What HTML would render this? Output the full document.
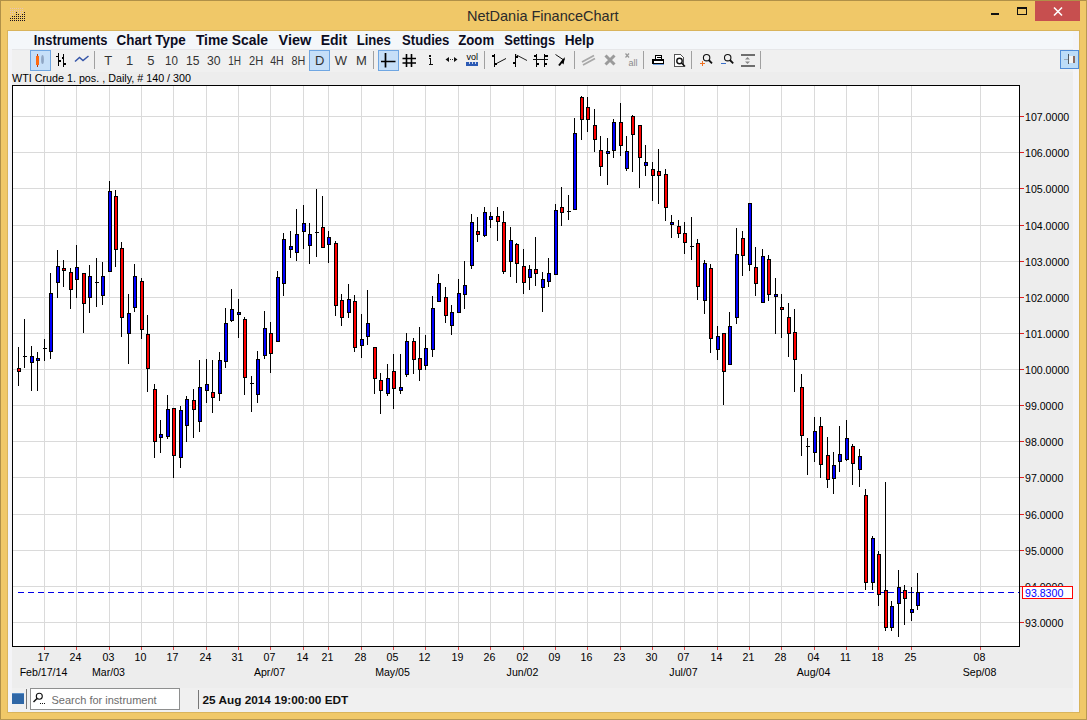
<!DOCTYPE html>
<html><head><meta charset="utf-8"><style>
*{margin:0;padding:0;box-sizing:border-box}
body{width:1087px;height:720px;overflow:hidden;background:#F0C868;font-family:"Liberation Sans",sans-serif;position:relative}
.a{position:absolute}
</style></head><body>
<div class="a" style="left:0;top:0;width:1087px;height:1px;background:#B09048"></div>
<div class="a" style="left:0;top:0;width:1px;height:720px;background:#B09048"></div>
<div class="a" style="left:1086px;top:0;width:1px;height:720px;background:#B89850"></div>
<div class="a" style="left:0;top:719px;width:1087px;height:1px;background:#B89850"></div>
<div class="a" style="left:7px;top:30px;width:1073px;height:683px;background:#D9B45C"></div>
<div class="a" style="left:8px;top:31px;width:1071px;height:681px;background:#EDEDED"></div>
<div class="a" style="left:8px;top:49px;width:1065px;height:23px;background:#F0F0F0"></div>
<div class="a" style="left:8px;top:49px;width:1065px;height:1px;background:#E6E7E9"></div>
<div class="a" style="left:8px;top:688px;width:1065px;height:24px;background:#F0F0F0"></div>
<div class="a" style="left:8px;top:49px;width:4px;height:663px;background:#F4F4F7"></div>
<div class="a" style="left:1073px;top:31px;width:6px;height:681px;background:#F4F4F8"></div>
<div class="a" style="left:8px;top:31px;width:1065px;height:18px;background:#F4F7FA"></div>
<svg class="a" style="left:0;top:0" width="1087" height="720" font-family="Liberation Sans, sans-serif" shape-rendering="crispEdges">
<rect x="10" y="8" width="1" height="1" fill="#E6C4B8"/>
<rect x="12" y="8" width="1" height="1" fill="#E6C4B8"/>
<rect x="14" y="8" width="1" height="1" fill="#E6C4B8"/>
<rect x="16" y="8" width="1" height="1" fill="#E6C4B8"/>
<rect x="18" y="8" width="1" height="1" fill="#E6C4B8"/>
<rect x="20" y="8" width="1" height="1" fill="#E6C4B8"/>
<rect x="22" y="8" width="1" height="1" fill="#E6C4B8"/>
<rect x="10" y="10" width="1" height="1" fill="#E6C4B8"/>
<rect x="12" y="10" width="1" height="1" fill="#E6C4B8"/>
<rect x="14" y="10" width="1" height="1" fill="#E6C4B8"/>
<rect x="16" y="10" width="1" height="1" fill="#E6C4B8"/>
<rect x="18" y="10" width="1" height="1" fill="#E6C4B8"/>
<rect x="20" y="10" width="1" height="1" fill="#E6C4B8"/>
<rect x="22" y="10" width="1" height="1" fill="#E6C4B8"/>
<rect x="10" y="12" width="1" height="1" fill="#E6C4B8"/>
<rect x="12" y="12" width="1" height="1" fill="#E6C4B8"/>
<rect x="14" y="12" width="1" height="1" fill="#E6C4B8"/>
<rect x="18" y="12" width="1" height="1" fill="#E6C4B8"/>
<rect x="20" y="12" width="1" height="1" fill="#E6C4B8"/>
<rect x="22" y="12" width="1" height="1" fill="#E6C4B8"/>
<rect x="10" y="14" width="1" height="1" fill="#E6C4B8"/>
<rect x="12" y="14" width="1" height="1" fill="#E6C4B8"/>
<rect x="20" y="14" width="1" height="1" fill="#E6C4B8"/>
<rect x="16" y="12" width="1" height="1" fill="#1A1020"/>
<rect x="24" y="12" width="1" height="1" fill="#1A1020"/>
<rect x="16" y="14" width="1" height="1" fill="#1A1020"/>
<rect x="18" y="14" width="1" height="1" fill="#1A1020"/>
<rect x="22" y="14" width="1" height="1" fill="#1A1020"/>
<rect x="24" y="14" width="1" height="1" fill="#1A1020"/>
<rect x="12" y="16" width="1" height="1" fill="#1A1020"/>
<rect x="14" y="16" width="1" height="1" fill="#1A1020"/>
<rect x="16" y="16" width="1" height="1" fill="#1A1020"/>
<rect x="18" y="16" width="1" height="1" fill="#1A1020"/>
<rect x="20" y="16" width="1" height="1" fill="#1A1020"/>
<rect x="22" y="16" width="1" height="1" fill="#1A1020"/>
<rect x="24" y="16" width="1" height="1" fill="#1A1020"/>
<rect x="10" y="18" width="1" height="1" fill="#1A1020"/>
<rect x="12" y="18" width="1" height="1" fill="#1A1020"/>
<rect x="14" y="18" width="1" height="1" fill="#1A1020"/>
<rect x="16" y="18" width="1" height="1" fill="#1A1020"/>
<rect x="18" y="18" width="1" height="1" fill="#1A1020"/>
<rect x="20" y="18" width="1" height="1" fill="#1A1020"/>
<rect x="22" y="18" width="1" height="1" fill="#1A1020"/>
<rect x="24" y="18" width="1" height="1" fill="#1A1020"/>
<rect x="10" y="20" width="1" height="1" fill="#1A1020"/>
<rect x="12" y="20" width="1" height="1" fill="#1A1020"/>
<rect x="14" y="20" width="1" height="1" fill="#1A1020"/>
<rect x="16" y="20" width="1" height="1" fill="#1A1020"/>
<rect x="18" y="20" width="1" height="1" fill="#1A1020"/>
<rect x="20" y="20" width="1" height="1" fill="#1A1020"/>
<rect x="22" y="20" width="1" height="1" fill="#1A1020"/>
<rect x="24" y="20" width="1" height="1" fill="#1A1020"/>
<rect x="1035" y="1" width="45" height="20" fill="#C74F4F"/>
<path d="M1054 7.5 L1062 15.5 M1062 7.5 L1054 15.5" stroke="#fff" stroke-width="1.6" shape-rendering="auto"/>
<rect x="991" y="13" width="8" height="2" fill="#111"/>
<rect x="1017.5" y="7.5" width="9" height="7" fill="none" stroke="#111" stroke-width="1"/>
<rect x="1017" y="7" width="10" height="2" fill="#111"/>
<rect x="30.5" y="50.5" width="20" height="20" fill="#C6DFF8" stroke="#6FA6E2" stroke-width="1"/>
<rect x="309.5" y="50.5" width="20" height="20" fill="#C6DFF8" stroke="#6FA6E2" stroke-width="1"/>
<rect x="378.5" y="50.5" width="20" height="20" fill="#C6DFF8" stroke="#6FA6E2" stroke-width="1"/>
<rect x="1060.5" y="50.5" width="18" height="18" fill="#BCDCF8" stroke="#4F8CD8" stroke-width="1"/>
<rect x="37" y="54" width="1" height="13" fill="#B03A10"/>
<rect x="36" y="56" width="3" height="9" fill="#FF6A10"/>
<ellipse cx="42.5" cy="59.5" rx="1.4" ry="4.5" fill="#8FA6C4" shape-rendering="auto"/>
<path d="M58.5 53 V66 M63.5 54 V67 M56 56.5 H58.5 M58.5 61 H60.5 M61.5 58 H63.5 M63.5 64 H66" stroke="#000" stroke-width="1.6" fill="none"/>
<polyline points="75,61.5 79.5,57.5 83,60.5 88.5,56" stroke="#3555A8" stroke-width="1.5" fill="none" shape-rendering="auto"/>
<rect x="94" y="51" width="1" height="18" fill="#A0A0A0"/>
<rect x="373" y="51" width="1" height="18" fill="#A0A0A0"/>
<rect x="484" y="51" width="1" height="18" fill="#A0A0A0"/>
<rect x="574" y="51" width="1" height="18" fill="#A0A0A0"/>
<rect x="643" y="51" width="1" height="18" fill="#A0A0A0"/>
<rect x="691" y="51" width="1" height="18" fill="#A0A0A0"/>
<rect x="760" y="51" width="1" height="18" fill="#A0A0A0"/>
<path d="M385.5 53 V67.5 M381 61.5 H395.5" stroke="#000" stroke-width="1.7" fill="none" shape-rendering="auto"/>
<path d="M406.5 54 V67 M411.5 54 V67 M402.5 58.5 H416 M402.5 63 H416" stroke="#000" stroke-width="1.6" fill="none" shape-rendering="auto"/>
<rect x="429" y="54.5" width="2" height="2" fill="#111"/>
<path d="M428.5 58.5 H430.5 V64.5 M428.5 64.5 H432.5" stroke="#111" stroke-width="1.4" fill="none"/>
<path d="M445.5 59.5 L449 57 V62 Z M457.5 59.5 L454 57 V62 Z" fill="#111" shape-rendering="auto"/>
<rect x="450" y="59" width="1" height="1" fill="#333"/><rect x="452" y="59" width="1" height="1" fill="#333"/>
<text x="466.5" y="59.8" font-size="9.5" fill="#000" font-family="Liberation Sans, sans-serif" textLength="11.5" lengthAdjust="spacingAndGlyphs">vol</text>
<rect x="466" y="62" width="12" height="4" fill="#2C5AB4"/>
<rect x="469" y="62" width="1" height="2" fill="#C8D4EC"/><rect x="472" y="62" width="1" height="2" fill="#C8D4EC"/><rect x="475" y="62" width="1" height="2" fill="#C8D4EC"/>
<path d="M494.5 54 V67 M492 56 H494.5 M494.5 64 H497" stroke="#000" stroke-width="1.6" fill="none"/><path d="M496.5 63.5 L506 58.5" stroke="#111" stroke-width="1" fill="none" shape-rendering="auto"/>
<path d="M515.5 54 V67 M513 63 H515.5 M515.5 57 H518" stroke="#000" stroke-width="1.5" fill="none"/>
<path d="M516.5 55 L527 60.5" stroke="#222" stroke-width="1" fill="none" shape-rendering="auto"/>
<path d="M536.5 54 V67 M544.5 54 V67 M533.5 56 H536.5 M544.5 56 H547.5 M536.5 64 H539 M544.5 64 H547" stroke="#000" stroke-width="1.6" fill="none"/><rect x="533" y="59" width="15" height="1" fill="#111"/>
<path d="M555.5 54.5 L563 59.5" stroke="#111" stroke-width="1" fill="none" shape-rendering="auto"/>
<path d="M565 57 L563.5 64.5 L561 62 Z" fill="#000" shape-rendering="auto"/>
<path d="M559 65.5 L564 59" stroke="#000" stroke-width="2" shape-rendering="auto"/>
<path d="M582 62 L594 55.5 M583 65 L595 58.5" stroke="#A8A8A8" stroke-width="1.8" fill="none" shape-rendering="auto"/>
<path d="M605.5 55.5 L614.5 64.5 M614.5 55.5 L605.5 64.5" stroke="#9A9A9A" stroke-width="3" fill="none" shape-rendering="auto"/>
<path d="M625.5 53.5 L629 57.5 M629 53.5 L625.5 57.5" stroke="#999" stroke-width="1.2" fill="none" shape-rendering="auto"/>
<text x="628.5" y="65.5" font-size="9" fill="#8A8A8A" font-family="Liberation Sans, sans-serif">all</text>
<path d="M655.5 55.5 H661.5 V59.5 H655.5 Z M656.5 57.5 H660.5" stroke="#000" stroke-width="1" fill="#fff"/>
<path d="M653 60 H663.5 V63.5 H653 Z" stroke="#000" stroke-width="1.5" fill="#fff"/>
<rect x="653" y="64" width="11" height="1" fill="#6A9ADA"/>
<path d="M674.5 54.5 H680.5 L683.5 57.5 V66.5 H674.5 Z" stroke="#555" stroke-width="1" fill="#fff"/>
<circle cx="679.5" cy="61" r="2.7" stroke="#111" stroke-width="1.4" fill="none" shape-rendering="auto"/>
<path d="M681.5 63 L685 66.5" stroke="#111" stroke-width="1.6" shape-rendering="auto"/>
<circle cx="706.6" cy="57.7" r="3.2" stroke="#111" stroke-width="1.1" fill="none" shape-rendering="auto"/>
<path d="M708.7 60 L712 63.3" stroke="#111" stroke-width="1.8" shape-rendering="auto"/>
<path d="M700 63.5 H705 M702.5 61 V66" stroke="#F07020" stroke-width="1.2"/>
<circle cx="727.7" cy="57.7" r="3.2" stroke="#111" stroke-width="1.1" fill="none" shape-rendering="auto"/>
<path d="M729.9 60 L733.2 63.3" stroke="#111" stroke-width="1.8" shape-rendering="auto"/>
<rect x="721" y="63" width="5" height="1" fill="#3A6FC8"/>
<rect x="741" y="54" width="14" height="2" fill="#6E6E6E"/><rect x="741" y="65" width="14" height="2" fill="#6E6E6E"/>
<path d="M745 59.5 L747.5 57 L750 59.5 Z M745 61.5 L747.5 64 L750 61.5 Z" fill="#888" shape-rendering="auto"/>
<rect x="1064" y="59" width="4" height="1" fill="#9AA8B8"/><rect x="1068" y="54" width="1" height="10" fill="#505860"/><rect x="1069" y="56" width="4" height="7" fill="#F4F4F4"/><rect x="1073" y="56" width="2" height="7" fill="#8A6A60"/>
<rect x="12" y="693" width="12" height="11" fill="#2F67A6"/>
<rect x="12" y="693" width="12" height="1" fill="#5C90C8"/>
<rect x="26" y="689" width="1" height="20" fill="#777"/>
<rect x="30.5" y="688.5" width="149" height="21" fill="#fff" stroke="#8E8F8F" stroke-width="1"/>
<circle cx="39.3" cy="696.2" r="3" stroke="#111" stroke-width="1.1" fill="none" shape-rendering="auto"/>
<path d="M37 698.5 L33.5 702" stroke="#111" stroke-width="1.5" shape-rendering="auto"/>
<rect x="40" y="703" width="1" height="1" fill="#111"/><rect x="42" y="703" width="1" height="1" fill="#111"/><rect x="44" y="703" width="1" height="1" fill="#111"/>
<rect x="198" y="690" width="1" height="19" fill="#777"/>
<text x="467" y="20.5" font-size="14.5" fill="#2B2B2B">NetDania FinanceChart</text>
<g font-size="14" font-weight="bold" fill="#0C0C1E"><text x="33.800000000000004" y="45" textLength="73.7" lengthAdjust="spacingAndGlyphs">Instruments</text>
<text x="116.6" y="45" textLength="69.10000000000001" lengthAdjust="spacingAndGlyphs">Chart Type</text>
<text x="195.9" y="45" textLength="72.10000000000001" lengthAdjust="spacingAndGlyphs">Time Scale</text>
<text x="278.5" y="45" textLength="32.7" lengthAdjust="spacingAndGlyphs">View</text>
<text x="320.70000000000005" y="45" textLength="26.4" lengthAdjust="spacingAndGlyphs">Edit</text>
<text x="356.70000000000005" y="45" textLength="34.199999999999996" lengthAdjust="spacingAndGlyphs">Lines</text>
<text x="402.1" y="45" textLength="47.3" lengthAdjust="spacingAndGlyphs">Studies</text>
<text x="458.3" y="45" textLength="35.8" lengthAdjust="spacingAndGlyphs">Zoom</text>
<text x="504.3" y="45" textLength="50.8" lengthAdjust="spacingAndGlyphs">Settings</text>
<text x="564.7" y="45" textLength="29.5" lengthAdjust="spacingAndGlyphs">Help</text></g>
<g font-size="13" fill="#333333"><text x="108.2" y="65" text-anchor="middle">T</text>
<text x="129.7" y="65" text-anchor="middle">1</text>
<text x="150.9" y="65" text-anchor="middle">5</text>
<text x="171.5" y="65" text-anchor="middle" textLength="12.9" lengthAdjust="spacingAndGlyphs">10</text>
<text x="192.8" y="65" text-anchor="middle" textLength="13.5" lengthAdjust="spacingAndGlyphs">15</text>
<text x="213.7" y="65" text-anchor="middle" textLength="13.6" lengthAdjust="spacingAndGlyphs">30</text>
<text x="234.7" y="65" text-anchor="middle" textLength="12.8" lengthAdjust="spacingAndGlyphs">1H</text>
<text x="256.1" y="65" text-anchor="middle" textLength="14.2" lengthAdjust="spacingAndGlyphs">2H</text>
<text x="277" y="65" text-anchor="middle" textLength="13.5" lengthAdjust="spacingAndGlyphs">4H</text>
<text x="298.3" y="65" text-anchor="middle" textLength="13.8" lengthAdjust="spacingAndGlyphs">8H</text>
<text x="319.8" y="65" text-anchor="middle">D</text>
<text x="340.8" y="65" text-anchor="middle">W</text>
<text x="361.4" y="65" text-anchor="middle">M</text></g>
<text x="12" y="82" font-size="10.6" fill="#000" textLength="179" lengthAdjust="spacingAndGlyphs">WTI Crude 1. pos. , Daily, # 140 / 300</text>
<rect x="12" y="85" width="1008" height="562" fill="#000"/>
<rect x="13" y="86" width="1006" height="560" fill="#fff"/>
<rect x="44" y="86" width="1" height="560" fill="#DADADA"/>
<rect x="76" y="86" width="1" height="560" fill="#DADADA"/>
<rect x="109" y="86" width="1" height="560" fill="#DADADA"/>
<rect x="141" y="86" width="1" height="560" fill="#DADADA"/>
<rect x="173" y="86" width="1" height="560" fill="#DADADA"/>
<rect x="206" y="86" width="1" height="560" fill="#DADADA"/>
<rect x="238" y="86" width="1" height="560" fill="#DADADA"/>
<rect x="270" y="86" width="1" height="560" fill="#DADADA"/>
<rect x="303" y="86" width="1" height="560" fill="#DADADA"/>
<rect x="328" y="86" width="1" height="560" fill="#DADADA"/>
<rect x="361" y="86" width="1" height="560" fill="#DADADA"/>
<rect x="393" y="86" width="1" height="560" fill="#DADADA"/>
<rect x="425" y="86" width="1" height="560" fill="#DADADA"/>
<rect x="458" y="86" width="1" height="560" fill="#DADADA"/>
<rect x="490" y="86" width="1" height="560" fill="#DADADA"/>
<rect x="523" y="86" width="1" height="560" fill="#DADADA"/>
<rect x="555" y="86" width="1" height="560" fill="#DADADA"/>
<rect x="587" y="86" width="1" height="560" fill="#DADADA"/>
<rect x="620" y="86" width="1" height="560" fill="#DADADA"/>
<rect x="652" y="86" width="1" height="560" fill="#DADADA"/>
<rect x="684" y="86" width="1" height="560" fill="#DADADA"/>
<rect x="717" y="86" width="1" height="560" fill="#DADADA"/>
<rect x="749" y="86" width="1" height="560" fill="#DADADA"/>
<rect x="781" y="86" width="1" height="560" fill="#DADADA"/>
<rect x="814" y="86" width="1" height="560" fill="#DADADA"/>
<rect x="846" y="86" width="1" height="560" fill="#DADADA"/>
<rect x="878" y="86" width="1" height="560" fill="#DADADA"/>
<rect x="911" y="86" width="1" height="560" fill="#DADADA"/>
<rect x="980" y="86" width="1" height="560" fill="#DADADA"/>
<rect x="13" y="116" width="1006" height="1" fill="#DADADA"/>
<rect x="13" y="152" width="1006" height="1" fill="#DADADA"/>
<rect x="13" y="188" width="1006" height="1" fill="#DADADA"/>
<rect x="13" y="225" width="1006" height="1" fill="#DADADA"/>
<rect x="13" y="261" width="1006" height="1" fill="#DADADA"/>
<rect x="13" y="297" width="1006" height="1" fill="#DADADA"/>
<rect x="13" y="333" width="1006" height="1" fill="#DADADA"/>
<rect x="13" y="369" width="1006" height="1" fill="#DADADA"/>
<rect x="13" y="405" width="1006" height="1" fill="#DADADA"/>
<rect x="13" y="441" width="1006" height="1" fill="#DADADA"/>
<rect x="13" y="477" width="1006" height="1" fill="#DADADA"/>
<rect x="13" y="514" width="1006" height="1" fill="#DADADA"/>
<rect x="13" y="550" width="1006" height="1" fill="#DADADA"/>
<rect x="13" y="586" width="1006" height="1" fill="#DADADA"/>
<rect x="13" y="622" width="1006" height="1" fill="#DADADA"/>
<rect x="44" y="647" width="1" height="3" fill="#E04040"/>
<rect x="76" y="647" width="1" height="3" fill="#E04040"/>
<rect x="109" y="647" width="1" height="3" fill="#E04040"/>
<rect x="141" y="647" width="1" height="3" fill="#E04040"/>
<rect x="173" y="647" width="1" height="3" fill="#E04040"/>
<rect x="206" y="647" width="1" height="3" fill="#E04040"/>
<rect x="238" y="647" width="1" height="3" fill="#E04040"/>
<rect x="270" y="647" width="1" height="3" fill="#E04040"/>
<rect x="303" y="647" width="1" height="3" fill="#E04040"/>
<rect x="328" y="647" width="1" height="3" fill="#E04040"/>
<rect x="361" y="647" width="1" height="3" fill="#E04040"/>
<rect x="393" y="647" width="1" height="3" fill="#E04040"/>
<rect x="425" y="647" width="1" height="3" fill="#E04040"/>
<rect x="458" y="647" width="1" height="3" fill="#E04040"/>
<rect x="490" y="647" width="1" height="3" fill="#E04040"/>
<rect x="523" y="647" width="1" height="3" fill="#E04040"/>
<rect x="555" y="647" width="1" height="3" fill="#E04040"/>
<rect x="587" y="647" width="1" height="3" fill="#E04040"/>
<rect x="620" y="647" width="1" height="3" fill="#E04040"/>
<rect x="652" y="647" width="1" height="3" fill="#E04040"/>
<rect x="684" y="647" width="1" height="3" fill="#E04040"/>
<rect x="717" y="647" width="1" height="3" fill="#E04040"/>
<rect x="749" y="647" width="1" height="3" fill="#E04040"/>
<rect x="781" y="647" width="1" height="3" fill="#E04040"/>
<rect x="814" y="647" width="1" height="3" fill="#E04040"/>
<rect x="846" y="647" width="1" height="3" fill="#E04040"/>
<rect x="878" y="647" width="1" height="3" fill="#E04040"/>
<rect x="911" y="647" width="1" height="3" fill="#E04040"/>
<rect x="980" y="647" width="1" height="3" fill="#E04040"/>
<rect x="1020" y="116" width="4" height="1" fill="#E02020"/>
<rect x="1020" y="152" width="4" height="1" fill="#E02020"/>
<rect x="1020" y="188" width="4" height="1" fill="#E02020"/>
<rect x="1020" y="225" width="4" height="1" fill="#E02020"/>
<rect x="1020" y="261" width="4" height="1" fill="#E02020"/>
<rect x="1020" y="297" width="4" height="1" fill="#E02020"/>
<rect x="1020" y="333" width="4" height="1" fill="#E02020"/>
<rect x="1020" y="369" width="4" height="1" fill="#E02020"/>
<rect x="1020" y="405" width="4" height="1" fill="#E02020"/>
<rect x="1020" y="441" width="4" height="1" fill="#E02020"/>
<rect x="1020" y="477" width="4" height="1" fill="#E02020"/>
<rect x="1020" y="514" width="4" height="1" fill="#E02020"/>
<rect x="1020" y="550" width="4" height="1" fill="#E02020"/>
<rect x="1020" y="586" width="4" height="1" fill="#E02020"/>
<rect x="1020" y="622" width="4" height="1" fill="#E02020"/>
<line x1="18" y1="592.5" x2="1019" y2="592.5" stroke="#0000E8" stroke-width="1" stroke-dasharray="6 4"/>
<rect x="18" y="347" width="1" height="39" fill="#000"/>
<rect x="17" y="368" width="4" height="4" fill="#000"/>
<rect x="18" y="369" width="2" height="2" fill="#FF0000"/>
<rect x="24" y="319" width="1" height="49" fill="#000"/>
<rect x="23" y="356" width="4" height="1" fill="#000"/>
<rect x="31" y="346" width="1" height="45" fill="#000"/>
<rect x="30" y="356" width="4" height="7" fill="#000"/>
<rect x="31" y="357" width="2" height="5" fill="#0000FF"/>
<rect x="37" y="352" width="1" height="39" fill="#000"/>
<rect x="36" y="358" width="4" height="3" fill="#000"/>
<rect x="37" y="359" width="2" height="1" fill="#0000FF"/>
<rect x="44" y="339" width="1" height="22" fill="#000"/>
<rect x="43" y="348" width="4" height="1" fill="#000"/>
<rect x="50" y="273" width="1" height="86" fill="#000"/>
<rect x="49" y="293" width="4" height="59" fill="#000"/>
<rect x="50" y="294" width="2" height="57" fill="#0000FF"/>
<rect x="57" y="250" width="1" height="48" fill="#000"/>
<rect x="56" y="266" width="4" height="17" fill="#000"/>
<rect x="57" y="267" width="2" height="15" fill="#0000FF"/>
<rect x="63" y="260" width="1" height="27" fill="#000"/>
<rect x="62" y="268" width="4" height="3" fill="#000"/>
<rect x="63" y="269" width="2" height="1" fill="#FF0000"/>
<rect x="70" y="268" width="1" height="41" fill="#000"/>
<rect x="69" y="272" width="4" height="18" fill="#000"/>
<rect x="70" y="273" width="2" height="16" fill="#FF0000"/>
<rect x="76" y="245" width="1" height="53" fill="#000"/>
<rect x="75" y="267" width="4" height="13" fill="#000"/>
<rect x="76" y="268" width="2" height="11" fill="#0000FF"/>
<rect x="83" y="273" width="1" height="60" fill="#000"/>
<rect x="82" y="273" width="4" height="31" fill="#000"/>
<rect x="83" y="274" width="2" height="29" fill="#FF0000"/>
<rect x="89" y="265" width="1" height="48" fill="#000"/>
<rect x="88" y="276" width="4" height="22" fill="#000"/>
<rect x="89" y="277" width="2" height="20" fill="#0000FF"/>
<rect x="96" y="258" width="1" height="49" fill="#000"/>
<rect x="95" y="282" width="4" height="1" fill="#000"/>
<rect x="102" y="262" width="1" height="43" fill="#000"/>
<rect x="101" y="276" width="4" height="20" fill="#000"/>
<rect x="102" y="277" width="2" height="18" fill="#0000FF"/>
<rect x="109" y="181" width="1" height="91" fill="#000"/>
<rect x="108" y="191" width="4" height="81" fill="#000"/>
<rect x="109" y="192" width="2" height="79" fill="#0000FF"/>
<rect x="115" y="190" width="1" height="77" fill="#000"/>
<rect x="114" y="196" width="4" height="54" fill="#000"/>
<rect x="115" y="197" width="2" height="52" fill="#FF0000"/>
<rect x="121" y="242" width="1" height="95" fill="#000"/>
<rect x="120" y="248" width="4" height="70" fill="#000"/>
<rect x="121" y="249" width="2" height="68" fill="#FF0000"/>
<rect x="128" y="294" width="1" height="70" fill="#000"/>
<rect x="127" y="313" width="4" height="21" fill="#000"/>
<rect x="128" y="314" width="2" height="19" fill="#0000FF"/>
<rect x="134" y="264" width="1" height="48" fill="#000"/>
<rect x="133" y="276" width="4" height="32" fill="#000"/>
<rect x="134" y="277" width="2" height="30" fill="#0000FF"/>
<rect x="141" y="278" width="1" height="61" fill="#000"/>
<rect x="140" y="281" width="4" height="49" fill="#000"/>
<rect x="141" y="282" width="2" height="47" fill="#FF0000"/>
<rect x="147" y="315" width="1" height="77" fill="#000"/>
<rect x="146" y="334" width="4" height="35" fill="#000"/>
<rect x="147" y="335" width="2" height="33" fill="#FF0000"/>
<rect x="154" y="384" width="1" height="74" fill="#000"/>
<rect x="153" y="389" width="4" height="53" fill="#000"/>
<rect x="154" y="390" width="2" height="51" fill="#FF0000"/>
<rect x="160" y="420" width="1" height="33" fill="#000"/>
<rect x="159" y="434" width="4" height="4" fill="#000"/>
<rect x="160" y="435" width="2" height="2" fill="#0000FF"/>
<rect x="167" y="395" width="1" height="44" fill="#000"/>
<rect x="166" y="409" width="4" height="28" fill="#000"/>
<rect x="167" y="410" width="2" height="26" fill="#0000FF"/>
<rect x="173" y="408" width="1" height="70" fill="#000"/>
<rect x="172" y="408" width="4" height="48" fill="#000"/>
<rect x="173" y="409" width="2" height="46" fill="#FF0000"/>
<rect x="180" y="406" width="1" height="62" fill="#000"/>
<rect x="179" y="410" width="4" height="48" fill="#000"/>
<rect x="180" y="411" width="2" height="46" fill="#0000FF"/>
<rect x="186" y="396" width="1" height="46" fill="#000"/>
<rect x="185" y="399" width="4" height="27" fill="#000"/>
<rect x="186" y="400" width="2" height="25" fill="#0000FF"/>
<rect x="193" y="389" width="1" height="49" fill="#000"/>
<rect x="192" y="400" width="4" height="10" fill="#000"/>
<rect x="193" y="401" width="2" height="8" fill="#FF0000"/>
<rect x="199" y="360" width="1" height="72" fill="#000"/>
<rect x="198" y="387" width="4" height="35" fill="#000"/>
<rect x="199" y="388" width="2" height="33" fill="#0000FF"/>
<rect x="206" y="359" width="1" height="44" fill="#000"/>
<rect x="205" y="384" width="4" height="7" fill="#000"/>
<rect x="206" y="385" width="2" height="5" fill="#0000FF"/>
<rect x="212" y="360" width="1" height="53" fill="#000"/>
<rect x="211" y="392" width="4" height="6" fill="#000"/>
<rect x="212" y="393" width="2" height="4" fill="#FF0000"/>
<rect x="219" y="352" width="1" height="49" fill="#000"/>
<rect x="218" y="360" width="4" height="34" fill="#000"/>
<rect x="219" y="361" width="2" height="32" fill="#0000FF"/>
<rect x="225" y="308" width="1" height="60" fill="#000"/>
<rect x="224" y="323" width="4" height="39" fill="#000"/>
<rect x="225" y="324" width="2" height="37" fill="#0000FF"/>
<rect x="231" y="289" width="1" height="33" fill="#000"/>
<rect x="230" y="309" width="4" height="12" fill="#000"/>
<rect x="231" y="310" width="2" height="10" fill="#0000FF"/>
<rect x="238" y="299" width="1" height="39" fill="#000"/>
<rect x="237" y="312" width="4" height="3" fill="#000"/>
<rect x="238" y="313" width="2" height="1" fill="#0000FF"/>
<rect x="244" y="317" width="1" height="78" fill="#000"/>
<rect x="243" y="319" width="4" height="59" fill="#000"/>
<rect x="244" y="320" width="2" height="57" fill="#FF0000"/>
<rect x="251" y="376" width="1" height="36" fill="#000"/>
<rect x="250" y="383" width="4" height="1" fill="#000"/>
<rect x="257" y="351" width="1" height="52" fill="#000"/>
<rect x="256" y="359" width="4" height="36" fill="#000"/>
<rect x="257" y="360" width="2" height="34" fill="#0000FF"/>
<rect x="264" y="311" width="1" height="48" fill="#000"/>
<rect x="263" y="328" width="4" height="28" fill="#000"/>
<rect x="264" y="329" width="2" height="26" fill="#0000FF"/>
<rect x="270" y="322" width="1" height="51" fill="#000"/>
<rect x="269" y="333" width="4" height="21" fill="#000"/>
<rect x="270" y="334" width="2" height="19" fill="#FF0000"/>
<rect x="277" y="271" width="1" height="71" fill="#000"/>
<rect x="276" y="277" width="4" height="65" fill="#000"/>
<rect x="277" y="278" width="2" height="63" fill="#0000FF"/>
<rect x="283" y="233" width="1" height="63" fill="#000"/>
<rect x="282" y="239" width="4" height="45" fill="#000"/>
<rect x="283" y="240" width="2" height="43" fill="#0000FF"/>
<rect x="290" y="231" width="1" height="27" fill="#000"/>
<rect x="289" y="246" width="4" height="4" fill="#000"/>
<rect x="290" y="247" width="2" height="2" fill="#0000FF"/>
<rect x="296" y="209" width="1" height="52" fill="#000"/>
<rect x="295" y="234" width="4" height="19" fill="#000"/>
<rect x="296" y="235" width="2" height="17" fill="#0000FF"/>
<rect x="303" y="205" width="1" height="44" fill="#000"/>
<rect x="302" y="223" width="4" height="9" fill="#000"/>
<rect x="303" y="224" width="2" height="7" fill="#0000FF"/>
<rect x="309" y="223" width="1" height="41" fill="#000"/>
<rect x="308" y="234" width="4" height="12" fill="#000"/>
<rect x="309" y="235" width="2" height="10" fill="#0000FF"/>
<rect x="316" y="189" width="1" height="68" fill="#000"/>
<rect x="315" y="232" width="4" height="1" fill="#000"/>
<rect x="322" y="196" width="1" height="52" fill="#000"/>
<rect x="321" y="227" width="4" height="21" fill="#000"/>
<rect x="322" y="228" width="2" height="19" fill="#FF0000"/>
<rect x="328" y="231" width="1" height="32" fill="#000"/>
<rect x="327" y="237" width="4" height="8" fill="#000"/>
<rect x="328" y="238" width="2" height="6" fill="#0000FF"/>
<rect x="335" y="241" width="1" height="75" fill="#000"/>
<rect x="334" y="243" width="4" height="63" fill="#000"/>
<rect x="335" y="244" width="2" height="61" fill="#FF0000"/>
<rect x="341" y="294" width="1" height="32" fill="#000"/>
<rect x="340" y="300" width="4" height="18" fill="#000"/>
<rect x="341" y="301" width="2" height="16" fill="#FF0000"/>
<rect x="348" y="284" width="1" height="34" fill="#000"/>
<rect x="347" y="299" width="4" height="14" fill="#000"/>
<rect x="348" y="300" width="2" height="12" fill="#0000FF"/>
<rect x="354" y="295" width="1" height="57" fill="#000"/>
<rect x="353" y="301" width="4" height="47" fill="#000"/>
<rect x="354" y="302" width="2" height="45" fill="#FF0000"/>
<rect x="361" y="314" width="1" height="44" fill="#000"/>
<rect x="360" y="339" width="4" height="7" fill="#000"/>
<rect x="361" y="340" width="2" height="5" fill="#0000FF"/>
<rect x="367" y="290" width="1" height="55" fill="#000"/>
<rect x="366" y="323" width="4" height="14" fill="#000"/>
<rect x="367" y="324" width="2" height="12" fill="#0000FF"/>
<rect x="374" y="347" width="1" height="47" fill="#000"/>
<rect x="373" y="347" width="4" height="32" fill="#000"/>
<rect x="374" y="348" width="2" height="30" fill="#FF0000"/>
<rect x="380" y="373" width="1" height="41" fill="#000"/>
<rect x="379" y="380" width="4" height="11" fill="#000"/>
<rect x="380" y="381" width="2" height="9" fill="#FF0000"/>
<rect x="387" y="364" width="1" height="32" fill="#000"/>
<rect x="386" y="378" width="4" height="16" fill="#000"/>
<rect x="387" y="379" width="2" height="14" fill="#0000FF"/>
<rect x="393" y="354" width="1" height="55" fill="#000"/>
<rect x="392" y="371" width="4" height="18" fill="#000"/>
<rect x="393" y="372" width="2" height="16" fill="#FF0000"/>
<rect x="400" y="354" width="1" height="40" fill="#000"/>
<rect x="399" y="387" width="4" height="4" fill="#000"/>
<rect x="400" y="388" width="2" height="2" fill="#0000FF"/>
<rect x="406" y="333" width="1" height="44" fill="#000"/>
<rect x="405" y="341" width="4" height="34" fill="#000"/>
<rect x="406" y="342" width="2" height="32" fill="#0000FF"/>
<rect x="413" y="338" width="1" height="36" fill="#000"/>
<rect x="412" y="341" width="4" height="19" fill="#000"/>
<rect x="413" y="342" width="2" height="17" fill="#FF0000"/>
<rect x="419" y="327" width="1" height="54" fill="#000"/>
<rect x="418" y="358" width="4" height="12" fill="#000"/>
<rect x="419" y="359" width="2" height="10" fill="#FF0000"/>
<rect x="425" y="335" width="1" height="35" fill="#000"/>
<rect x="424" y="348" width="4" height="18" fill="#000"/>
<rect x="425" y="349" width="2" height="16" fill="#0000FF"/>
<rect x="432" y="296" width="1" height="61" fill="#000"/>
<rect x="431" y="308" width="4" height="42" fill="#000"/>
<rect x="432" y="309" width="2" height="40" fill="#0000FF"/>
<rect x="438" y="274" width="1" height="28" fill="#000"/>
<rect x="437" y="283" width="4" height="19" fill="#000"/>
<rect x="438" y="284" width="2" height="17" fill="#0000FF"/>
<rect x="445" y="287" width="1" height="36" fill="#000"/>
<rect x="444" y="297" width="4" height="19" fill="#000"/>
<rect x="445" y="298" width="2" height="17" fill="#FF0000"/>
<rect x="451" y="305" width="1" height="30" fill="#000"/>
<rect x="450" y="312" width="4" height="14" fill="#000"/>
<rect x="451" y="313" width="2" height="12" fill="#0000FF"/>
<rect x="458" y="279" width="1" height="34" fill="#000"/>
<rect x="457" y="293" width="4" height="20" fill="#000"/>
<rect x="458" y="294" width="2" height="18" fill="#0000FF"/>
<rect x="464" y="261" width="1" height="48" fill="#000"/>
<rect x="463" y="285" width="4" height="10" fill="#000"/>
<rect x="464" y="286" width="2" height="8" fill="#0000FF"/>
<rect x="471" y="214" width="1" height="55" fill="#000"/>
<rect x="470" y="222" width="4" height="44" fill="#000"/>
<rect x="471" y="223" width="2" height="42" fill="#0000FF"/>
<rect x="477" y="217" width="1" height="25" fill="#000"/>
<rect x="476" y="231" width="4" height="4" fill="#000"/>
<rect x="477" y="232" width="2" height="2" fill="#FF0000"/>
<rect x="484" y="207" width="1" height="30" fill="#000"/>
<rect x="483" y="212" width="4" height="24" fill="#000"/>
<rect x="484" y="213" width="2" height="22" fill="#0000FF"/>
<rect x="490" y="212" width="1" height="16" fill="#000"/>
<rect x="489" y="216" width="4" height="4" fill="#000"/>
<rect x="490" y="217" width="2" height="2" fill="#0000FF"/>
<rect x="497" y="207" width="1" height="34" fill="#000"/>
<rect x="496" y="216" width="4" height="6" fill="#000"/>
<rect x="497" y="217" width="2" height="4" fill="#FF0000"/>
<rect x="503" y="211" width="1" height="63" fill="#000"/>
<rect x="502" y="222" width="4" height="50" fill="#000"/>
<rect x="503" y="223" width="2" height="48" fill="#FF0000"/>
<rect x="510" y="227" width="1" height="50" fill="#000"/>
<rect x="509" y="240" width="4" height="22" fill="#000"/>
<rect x="510" y="241" width="2" height="20" fill="#0000FF"/>
<rect x="516" y="243" width="1" height="40" fill="#000"/>
<rect x="515" y="244" width="4" height="20" fill="#000"/>
<rect x="516" y="245" width="2" height="18" fill="#FF0000"/>
<rect x="523" y="249" width="1" height="45" fill="#000"/>
<rect x="522" y="266" width="4" height="17" fill="#000"/>
<rect x="523" y="267" width="2" height="15" fill="#FF0000"/>
<rect x="529" y="265" width="1" height="25" fill="#000"/>
<rect x="528" y="269" width="4" height="9" fill="#000"/>
<rect x="529" y="270" width="2" height="7" fill="#0000FF"/>
<rect x="535" y="237" width="1" height="49" fill="#000"/>
<rect x="534" y="269" width="4" height="5" fill="#000"/>
<rect x="535" y="270" width="2" height="3" fill="#FF0000"/>
<rect x="542" y="272" width="1" height="40" fill="#000"/>
<rect x="541" y="279" width="4" height="9" fill="#000"/>
<rect x="542" y="280" width="2" height="7" fill="#0000FF"/>
<rect x="548" y="258" width="1" height="29" fill="#000"/>
<rect x="547" y="273" width="4" height="9" fill="#000"/>
<rect x="548" y="274" width="2" height="7" fill="#0000FF"/>
<rect x="555" y="204" width="1" height="71" fill="#000"/>
<rect x="554" y="210" width="4" height="65" fill="#000"/>
<rect x="555" y="211" width="2" height="63" fill="#0000FF"/>
<rect x="561" y="187" width="1" height="39" fill="#000"/>
<rect x="560" y="207" width="4" height="6" fill="#000"/>
<rect x="561" y="208" width="2" height="4" fill="#FF0000"/>
<rect x="568" y="195" width="1" height="25" fill="#000"/>
<rect x="567" y="211" width="4" height="1" fill="#000"/>
<rect x="574" y="118" width="1" height="92" fill="#000"/>
<rect x="573" y="133" width="4" height="77" fill="#000"/>
<rect x="574" y="134" width="2" height="75" fill="#0000FF"/>
<rect x="581" y="96" width="1" height="44" fill="#000"/>
<rect x="580" y="97" width="4" height="23" fill="#000"/>
<rect x="581" y="98" width="2" height="21" fill="#FF0000"/>
<rect x="587" y="97" width="1" height="35" fill="#000"/>
<rect x="586" y="107" width="4" height="13" fill="#000"/>
<rect x="587" y="108" width="2" height="11" fill="#FF0000"/>
<rect x="594" y="109" width="1" height="43" fill="#000"/>
<rect x="593" y="125" width="4" height="15" fill="#000"/>
<rect x="594" y="126" width="2" height="13" fill="#FF0000"/>
<rect x="600" y="136" width="1" height="40" fill="#000"/>
<rect x="599" y="150" width="4" height="17" fill="#000"/>
<rect x="600" y="151" width="2" height="15" fill="#FF0000"/>
<rect x="607" y="138" width="1" height="47" fill="#000"/>
<rect x="606" y="151" width="4" height="3" fill="#000"/>
<rect x="607" y="152" width="2" height="1" fill="#0000FF"/>
<rect x="613" y="119" width="1" height="39" fill="#000"/>
<rect x="612" y="122" width="4" height="29" fill="#000"/>
<rect x="613" y="123" width="2" height="27" fill="#0000FF"/>
<rect x="620" y="103" width="1" height="53" fill="#000"/>
<rect x="619" y="122" width="4" height="24" fill="#000"/>
<rect x="620" y="123" width="2" height="22" fill="#FF0000"/>
<rect x="626" y="136" width="1" height="35" fill="#000"/>
<rect x="625" y="151" width="4" height="18" fill="#000"/>
<rect x="626" y="152" width="2" height="16" fill="#0000FF"/>
<rect x="632" y="115" width="1" height="57" fill="#000"/>
<rect x="631" y="116" width="4" height="19" fill="#000"/>
<rect x="632" y="117" width="2" height="17" fill="#FF0000"/>
<rect x="639" y="125" width="1" height="63" fill="#000"/>
<rect x="638" y="125" width="4" height="33" fill="#000"/>
<rect x="639" y="126" width="2" height="31" fill="#FF0000"/>
<rect x="645" y="145" width="1" height="31" fill="#000"/>
<rect x="644" y="162" width="4" height="4" fill="#000"/>
<rect x="645" y="163" width="2" height="2" fill="#0000FF"/>
<rect x="652" y="162" width="1" height="39" fill="#000"/>
<rect x="651" y="169" width="4" height="7" fill="#000"/>
<rect x="652" y="170" width="2" height="5" fill="#FF0000"/>
<rect x="658" y="149" width="1" height="55" fill="#000"/>
<rect x="657" y="171" width="4" height="5" fill="#000"/>
<rect x="658" y="172" width="2" height="3" fill="#FF0000"/>
<rect x="665" y="169" width="1" height="52" fill="#000"/>
<rect x="664" y="174" width="4" height="34" fill="#000"/>
<rect x="665" y="175" width="2" height="32" fill="#FF0000"/>
<rect x="671" y="215" width="1" height="23" fill="#000"/>
<rect x="670" y="222" width="4" height="3" fill="#000"/>
<rect x="671" y="223" width="2" height="1" fill="#0000FF"/>
<rect x="678" y="220" width="1" height="18" fill="#000"/>
<rect x="677" y="226" width="4" height="8" fill="#000"/>
<rect x="678" y="227" width="2" height="6" fill="#FF0000"/>
<rect x="684" y="222" width="1" height="32" fill="#000"/>
<rect x="683" y="233" width="4" height="10" fill="#000"/>
<rect x="684" y="234" width="2" height="8" fill="#FF0000"/>
<rect x="691" y="217" width="1" height="43" fill="#000"/>
<rect x="690" y="246" width="4" height="1" fill="#000"/>
<rect x="697" y="239" width="1" height="61" fill="#000"/>
<rect x="696" y="243" width="4" height="44" fill="#000"/>
<rect x="697" y="244" width="2" height="42" fill="#FF0000"/>
<rect x="704" y="260" width="1" height="54" fill="#000"/>
<rect x="703" y="263" width="4" height="38" fill="#000"/>
<rect x="704" y="264" width="2" height="36" fill="#0000FF"/>
<rect x="710" y="264" width="1" height="89" fill="#000"/>
<rect x="709" y="268" width="4" height="71" fill="#000"/>
<rect x="710" y="269" width="2" height="69" fill="#FF0000"/>
<rect x="717" y="326" width="1" height="34" fill="#000"/>
<rect x="716" y="336" width="4" height="14" fill="#000"/>
<rect x="717" y="337" width="2" height="12" fill="#0000FF"/>
<rect x="723" y="333" width="1" height="72" fill="#000"/>
<rect x="722" y="333" width="4" height="39" fill="#000"/>
<rect x="723" y="334" width="2" height="37" fill="#FF0000"/>
<rect x="729" y="312" width="1" height="53" fill="#000"/>
<rect x="728" y="326" width="4" height="39" fill="#000"/>
<rect x="729" y="327" width="2" height="37" fill="#0000FF"/>
<rect x="736" y="228" width="1" height="96" fill="#000"/>
<rect x="735" y="254" width="4" height="64" fill="#000"/>
<rect x="736" y="255" width="2" height="62" fill="#0000FF"/>
<rect x="742" y="231" width="1" height="45" fill="#000"/>
<rect x="741" y="238" width="4" height="18" fill="#000"/>
<rect x="742" y="239" width="2" height="16" fill="#FF0000"/>
<rect x="749" y="203" width="1" height="68" fill="#000"/>
<rect x="748" y="203" width="4" height="62" fill="#000"/>
<rect x="749" y="204" width="2" height="60" fill="#0000FF"/>
<rect x="755" y="247" width="1" height="49" fill="#000"/>
<rect x="754" y="267" width="4" height="17" fill="#000"/>
<rect x="755" y="268" width="2" height="15" fill="#FF0000"/>
<rect x="762" y="249" width="1" height="54" fill="#000"/>
<rect x="761" y="256" width="4" height="47" fill="#000"/>
<rect x="762" y="257" width="2" height="45" fill="#0000FF"/>
<rect x="768" y="255" width="1" height="46" fill="#000"/>
<rect x="767" y="259" width="4" height="36" fill="#000"/>
<rect x="768" y="260" width="2" height="34" fill="#FF0000"/>
<rect x="775" y="278" width="1" height="56" fill="#000"/>
<rect x="774" y="294" width="4" height="3" fill="#000"/>
<rect x="775" y="295" width="2" height="1" fill="#0000FF"/>
<rect x="781" y="294" width="1" height="44" fill="#000"/>
<rect x="780" y="307" width="4" height="3" fill="#000"/>
<rect x="781" y="308" width="2" height="1" fill="#FF0000"/>
<rect x="788" y="303" width="1" height="54" fill="#000"/>
<rect x="787" y="317" width="4" height="17" fill="#000"/>
<rect x="788" y="318" width="2" height="15" fill="#FF0000"/>
<rect x="794" y="309" width="1" height="83" fill="#000"/>
<rect x="793" y="332" width="4" height="28" fill="#000"/>
<rect x="794" y="333" width="2" height="26" fill="#FF0000"/>
<rect x="801" y="374" width="1" height="82" fill="#000"/>
<rect x="800" y="387" width="4" height="49" fill="#000"/>
<rect x="801" y="388" width="2" height="47" fill="#FF0000"/>
<rect x="807" y="438" width="1" height="37" fill="#000"/>
<rect x="806" y="446" width="4" height="1" fill="#000"/>
<rect x="814" y="417" width="1" height="45" fill="#000"/>
<rect x="813" y="431" width="4" height="22" fill="#000"/>
<rect x="814" y="432" width="2" height="20" fill="#0000FF"/>
<rect x="820" y="417" width="1" height="61" fill="#000"/>
<rect x="819" y="426" width="4" height="39" fill="#000"/>
<rect x="820" y="427" width="2" height="37" fill="#FF0000"/>
<rect x="827" y="437" width="1" height="51" fill="#000"/>
<rect x="826" y="455" width="4" height="25" fill="#000"/>
<rect x="827" y="456" width="2" height="23" fill="#FF0000"/>
<rect x="833" y="452" width="1" height="42" fill="#000"/>
<rect x="832" y="465" width="4" height="14" fill="#000"/>
<rect x="833" y="466" width="2" height="12" fill="#0000FF"/>
<rect x="839" y="426" width="1" height="46" fill="#000"/>
<rect x="838" y="454" width="4" height="8" fill="#000"/>
<rect x="839" y="455" width="2" height="6" fill="#0000FF"/>
<rect x="846" y="420" width="1" height="41" fill="#000"/>
<rect x="845" y="438" width="4" height="22" fill="#000"/>
<rect x="846" y="439" width="2" height="20" fill="#0000FF"/>
<rect x="852" y="444" width="1" height="41" fill="#000"/>
<rect x="851" y="446" width="4" height="18" fill="#000"/>
<rect x="852" y="447" width="2" height="16" fill="#FF0000"/>
<rect x="859" y="449" width="1" height="38" fill="#000"/>
<rect x="858" y="456" width="4" height="14" fill="#000"/>
<rect x="859" y="457" width="2" height="12" fill="#0000FF"/>
<rect x="865" y="489" width="1" height="101" fill="#000"/>
<rect x="864" y="495" width="4" height="88" fill="#000"/>
<rect x="865" y="496" width="2" height="86" fill="#FF0000"/>
<rect x="872" y="536" width="1" height="54" fill="#000"/>
<rect x="871" y="538" width="4" height="45" fill="#000"/>
<rect x="872" y="539" width="2" height="43" fill="#0000FF"/>
<rect x="878" y="551" width="1" height="55" fill="#000"/>
<rect x="877" y="554" width="4" height="41" fill="#000"/>
<rect x="878" y="555" width="2" height="39" fill="#FF0000"/>
<rect x="885" y="482" width="1" height="149" fill="#000"/>
<rect x="884" y="590" width="4" height="38" fill="#000"/>
<rect x="885" y="591" width="2" height="36" fill="#FF0000"/>
<rect x="891" y="601" width="1" height="30" fill="#000"/>
<rect x="890" y="606" width="4" height="22" fill="#000"/>
<rect x="891" y="607" width="2" height="20" fill="#0000FF"/>
<rect x="898" y="570" width="1" height="67" fill="#000"/>
<rect x="897" y="587" width="4" height="17" fill="#000"/>
<rect x="898" y="588" width="2" height="15" fill="#0000FF"/>
<rect x="904" y="585" width="1" height="40" fill="#000"/>
<rect x="903" y="590" width="4" height="9" fill="#000"/>
<rect x="904" y="591" width="2" height="7" fill="#FF0000"/>
<rect x="911" y="587" width="1" height="34" fill="#000"/>
<rect x="910" y="609" width="4" height="4" fill="#000"/>
<rect x="911" y="610" width="2" height="2" fill="#0000FF"/>
<rect x="917" y="573" width="1" height="37" fill="#000"/>
<rect x="916" y="592" width="4" height="14" fill="#000"/>
<rect x="917" y="593" width="2" height="12" fill="#0000FF"/>
<text x="1025" y="121" font-size="10.6">107.0000</text>
<text x="1025" y="157" font-size="10.6">106.0000</text>
<text x="1025" y="193" font-size="10.6">105.0000</text>
<text x="1025" y="230" font-size="10.6">104.0000</text>
<text x="1025" y="266" font-size="10.6">103.0000</text>
<text x="1025" y="302" font-size="10.6">102.0000</text>
<text x="1025" y="338" font-size="10.6">101.0000</text>
<text x="1025" y="374" font-size="10.6">100.0000</text>
<text x="1025" y="410" font-size="10.6">99.0000</text>
<text x="1025" y="446" font-size="10.6">98.0000</text>
<text x="1025" y="482" font-size="10.6">97.0000</text>
<text x="1025" y="519" font-size="10.6">96.0000</text>
<text x="1025" y="555" font-size="10.6">95.0000</text>
<text x="1025" y="591" font-size="10.6">94.0000</text>
<text x="1025" y="627" font-size="10.6">93.0000</text>
<text x="43.5" y="661" font-size="10.6" text-anchor="middle">17</text>
<text x="75.5" y="661" font-size="10.6" text-anchor="middle">24</text>
<text x="108.5" y="661" font-size="10.6" text-anchor="middle">03</text>
<text x="140.5" y="661" font-size="10.6" text-anchor="middle">10</text>
<text x="172.5" y="661" font-size="10.6" text-anchor="middle">17</text>
<text x="205.5" y="661" font-size="10.6" text-anchor="middle">24</text>
<text x="237.5" y="661" font-size="10.6" text-anchor="middle">31</text>
<text x="269.5" y="661" font-size="10.6" text-anchor="middle">07</text>
<text x="302.5" y="661" font-size="10.6" text-anchor="middle">14</text>
<text x="327.5" y="661" font-size="10.6" text-anchor="middle">21</text>
<text x="360.5" y="661" font-size="10.6" text-anchor="middle">28</text>
<text x="392.5" y="661" font-size="10.6" text-anchor="middle">05</text>
<text x="424.5" y="661" font-size="10.6" text-anchor="middle">12</text>
<text x="457.5" y="661" font-size="10.6" text-anchor="middle">19</text>
<text x="489.5" y="661" font-size="10.6" text-anchor="middle">26</text>
<text x="522.5" y="661" font-size="10.6" text-anchor="middle">02</text>
<text x="554.5" y="661" font-size="10.6" text-anchor="middle">09</text>
<text x="586.5" y="661" font-size="10.6" text-anchor="middle">16</text>
<text x="619.5" y="661" font-size="10.6" text-anchor="middle">23</text>
<text x="651.5" y="661" font-size="10.6" text-anchor="middle">30</text>
<text x="683.5" y="661" font-size="10.6" text-anchor="middle">07</text>
<text x="716.5" y="661" font-size="10.6" text-anchor="middle">14</text>
<text x="748.5" y="661" font-size="10.6" text-anchor="middle">21</text>
<text x="780.5" y="661" font-size="10.6" text-anchor="middle">28</text>
<text x="813.5" y="661" font-size="10.6" text-anchor="middle">04</text>
<text x="845.5" y="661" font-size="10.6" text-anchor="middle">11</text>
<text x="877.5" y="661" font-size="10.6" text-anchor="middle">18</text>
<text x="910.5" y="661" font-size="10.6" text-anchor="middle">25</text>
<text x="979.5" y="661" font-size="10.6" text-anchor="middle">08</text>
<text x="43.5" y="676" font-size="10.6" text-anchor="middle">Feb/17/14</text>
<text x="108.5" y="676" font-size="10.6" text-anchor="middle">Mar/03</text>
<text x="269.5" y="676" font-size="10.6" text-anchor="middle">Apr/07</text>
<text x="392.5" y="676" font-size="10.6" text-anchor="middle">May/05</text>
<text x="522.5" y="676" font-size="10.6" text-anchor="middle">Jun/02</text>
<text x="683.5" y="676" font-size="10.6" text-anchor="middle">Jul/07</text>
<text x="813.5" y="676" font-size="10.6" text-anchor="middle">Aug/04</text>
<text x="979.5" y="676" font-size="10.6" text-anchor="middle">Sep/08</text>
<rect x="1022.5" y="586.5" width="50" height="12" fill="#fff" stroke="#FF0000" stroke-width="1"/>
<text x="1025" y="597" font-size="10.6" fill="#0000FF">93.8300</text>
<text x="202.5" y="704" font-size="11.8" font-weight="bold" fill="#111">25 Aug 2014 19:00:00 EDT</text>
<text x="51.5" y="703.5" font-size="11" fill="#6D6D6D">Search for instrument</text>
</svg>
</body></html>
